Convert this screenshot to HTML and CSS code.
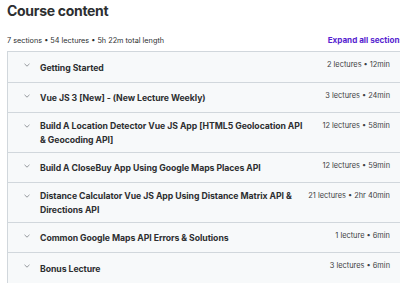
FILE: index.html
```html
<!DOCTYPE html>
<html>
<head>
<meta charset="utf-8">
<link rel="stylesheet" href="styles.css">
</head>
<body>
<div class="page">
  <h2 class="title">Course content</h2>
  <div class="summary">
    <span class="stats">7 sections • 54 lectures • 5h 22m total length</span>
    <span class="expand">Expand all sections</span>
  </div>
  <div class="panel">
    <div class="row"><span class="chev"><svg width="6" height="4" viewBox="0 0 6 4"><path d="M0.5 0.8 L3 3.2 L5.5 0.8" fill="none" stroke="#8a8f93" stroke-width="0.9"/></svg></span><span class="name">Getting Started</span><span class="meta">2 lectures • 12min</span></div>
    <div class="row"><span class="chev"><svg width="6" height="4" viewBox="0 0 6 4"><path d="M0.5 0.8 L3 3.2 L5.5 0.8" fill="none" stroke="#8a8f93" stroke-width="0.9"/></svg></span><span class="name">Vue JS 3 [New] - (New Lecture Weekly)</span><span class="meta">3 lectures • 24min</span></div>
    <div class="row"><span class="chev"><svg width="6" height="4" viewBox="0 0 6 4"><path d="M0.5 0.8 L3 3.2 L5.5 0.8" fill="none" stroke="#8a8f93" stroke-width="0.9"/></svg></span><span class="name">Build A Location Detector Vue JS App [HTML5 Geolocation API &amp; Geocoding API]</span><span class="meta">12 lectures • 58min</span></div>
    <div class="row"><span class="chev"><svg width="6" height="4" viewBox="0 0 6 4"><path d="M0.5 0.8 L3 3.2 L5.5 0.8" fill="none" stroke="#8a8f93" stroke-width="0.9"/></svg></span><span class="name">Build A CloseBuy App Using Google Maps Places API</span><span class="meta">12 lectures • 59min</span></div>
    <div class="row"><span class="chev"><svg width="6" height="4" viewBox="0 0 6 4"><path d="M0.5 0.8 L3 3.2 L5.5 0.8" fill="none" stroke="#8a8f93" stroke-width="0.9"/></svg></span><span class="name">Distance Calculator Vue JS App Using Distance Matrix API &amp; Directions API</span><span class="meta">21 lectures • 2hr 40min</span></div>
    <div class="row"><span class="chev"><svg width="6" height="4" viewBox="0 0 6 4"><path d="M0.5 0.8 L3 3.2 L5.5 0.8" fill="none" stroke="#8a8f93" stroke-width="0.9"/></svg></span><span class="name">Common Google Maps API Errors &amp; Solutions</span><span class="meta">1 lecture • 6min</span></div>
    <div class="row"><span class="chev"><svg width="6" height="4" viewBox="0 0 6 4"><path d="M0.5 0.8 L3 3.2 L5.5 0.8" fill="none" stroke="#8a8f93" stroke-width="0.9"/></svg></span><span class="name">Bonus Lecture</span><span class="meta">3 lectures • 6min</span></div>
  </div>
</div>
</body>
</html>
```

FILE: styles.css
```css
html, body {
  margin: 0;
  padding: 0;
  background: #ffffff;
  overflow: hidden;
}
.page {
  width: 397px;
  padding: 1px 0 0 7px;
  font-family: "Inter", "Noto Sans", sans-serif;
  color: #2d2f31;
}
.title {
  margin: 0;
  font-size: 14px;
  line-height: 20px;
  font-weight: 700;
  letter-spacing: -0.3px;
}
.summary {
  display: flex;
  justify-content: space-between;
  align-items: center;
  margin-top: 13px;
  height: 12px;
  font-size: 7.3px;
  margin-bottom: 5px;
}
.expand {
  color: #5624d0;
  font-weight: 700;
  font-size: 8.1px;
  white-space: nowrap;
}
.panel {
  border: 1px solid #d1d7dc;
  border-right: none;
  background: #f7f9fa;
}
.row {
  display: flex;
  align-items: center;
  min-height: 30px;
  padding: 6px 14px 5px 0;
  box-sizing: border-box;
  border-bottom: 1px solid #d1d7dc;
}
.row:first-child {
  min-height: 31px;
}
.row:last-child {
  border-bottom: none;
}
.chev {
  width: 32px;
  flex: none;
  padding-left: 16px;
  box-sizing: border-box;
  align-self: flex-start;
  margin-top: 5px;
}
.chev svg {
  display: block;
}
.name {
  flex: 1;
  font-weight: 700;
  font-size: 8.7px;
  line-height: 14px;
  padding-right: 14px;
  letter-spacing: -0.05px;
}
.meta {
  flex: none;
  font-size: 7.4px;
  align-self: flex-start;
  line-height: 14px;
  color: #3e4143;
}
```
